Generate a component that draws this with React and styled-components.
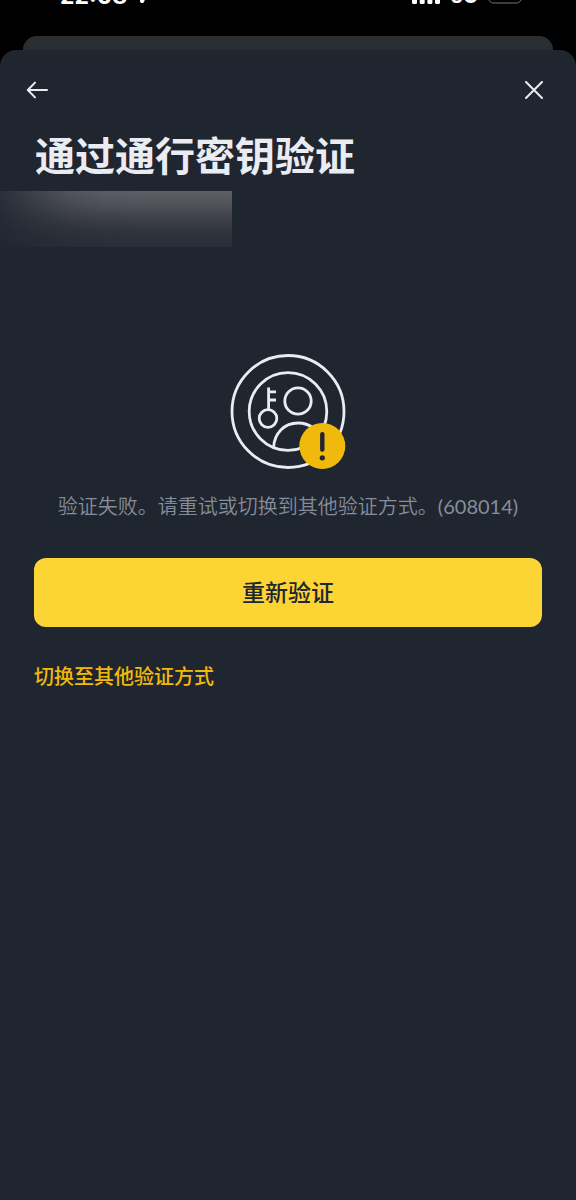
import styled, { createGlobalStyle } from 'styled-components';

const colors = {
  sheet: '#202630',
  sheetBehind: '#292e33',
  text: '#eaecf2',
  muted: '#868d9a',
  primary: '#fcd535',
  accent: '#f0b90b',
  dark: '#202630',
};

const GlobalStyle = createGlobalStyle`
  * {
    box-sizing: border-box;
  }

  body {
    margin: 0;
    background-color: #000;
    color: ${colors.text};
    font-family: Lato, "Noto Sans CJK SC", sans-serif;
  }
`;

const Screen = styled.div`
  min-height: 100vh;
  display: flex;
  flex-direction: column;
`;

const StatusBar = styled.div`
  height: 36px;
  padding: 0 54px 28px 60px;
  display: flex;
  align-items: flex-end;
  justify-content: space-between;
  overflow: hidden;
  color: #fff;
  font-family: Inter, sans-serif;
  font-size: 23px;
  font-weight: 700;
  line-height: 24px;
`;

const StatusGroup = styled.div`
  display: flex;
  align-items: flex-end;
  gap: ${({ $gap }) => $gap};

  svg {
    display: block;
    margin-bottom: 4px;
  }
`;

const Network = styled.span`
  font-size: 20px;
`;

const SheetBehind = styled.div`
  height: 14px;
  margin: 0 23px;
  border-radius: 14px 14px 0 0;
  background-color: ${colors.sheetBehind};
`;

const Sheet = styled.main`
  flex: 1;
  border-radius: 16px 16px 0 0;
  background-color: ${colors.sheet};
`;

const SheetHeader = styled.header`
  display: flex;
  justify-content: space-between;
  padding: 24px 26px 0;
`;

const IconButton = styled.button`
  width: 32px;
  height: 32px;
  padding: 0;
  display: flex;
  align-items: center;
  justify-content: ${({ $align }) => $align};
  border: 0;
  background: none;
  color: ${colors.text};
  cursor: pointer;
`;

const Title = styled.h1`
  margin: 20px 35px 0;
  font-size: 40px;
  font-weight: 700;
  line-height: 60px;
`;

const HiddenAccount = styled.div`
  width: 40.3%;
  height: 56px;
  margin-top: 5px;
  background:
    linear-gradient(to right, #202630d9, #20263080 15%, #20263033 30%, #2026300d 45%, #20263000 60%),
    linear-gradient(#5e5f66, #50525a 25%, #3e4149 48%, #30343d 72%, #282d37);
`;

const Content = styled.section`
  padding: 107px 34px 0;
  display: flex;
  flex-direction: column;
`;

const PasskeyArt = styled.svg`
  display: block;
  align-self: center;
`;

const Message = styled.p`
  margin: 20px 0 0;
  color: ${colors.muted};
  font-size: 20px;
  font-weight: 350;
  line-height: 32px;
  text-align: center;
`;

const ErrorCode = styled.span`
  font-weight: 400;
`;

const RetryButton = styled.button`
  height: 69px;
  margin-top: 36px;
  padding: 0 0 4px;
  border: 0;
  border-radius: 12px;
  background-color: ${colors.primary};
  color: ${colors.dark};
  font-family: inherit;
  font-size: 23px;
  font-weight: 500;
  cursor: pointer;
`;

const SwitchLink = styled.a`
  align-self: flex-start;
  margin-top: 33px;
  color: ${colors.accent};
  font-size: 20px;
  font-weight: 500;
  line-height: 32px;
  text-decoration: none;
`;

const PasskeyFailed = () => (
  <PasskeyArt width="116" height="116" viewBox="0 0 116 116" fill="none" aria-hidden="true">
    <g stroke={colors.text} strokeWidth="2.8">
      <circle cx="58" cy="57.5" r="56" />
      <circle cx="58" cy="57.5" r="38.8" />
      <circle cx="68" cy="47" r="13.2" />
      <circle cx="38" cy="64.5" r="8.8" />
      <path d="M38.6 55.7V33.5M38.6 37.8h7.4M38.6 46h7.4" />
      <path d="M43.6 93.5C44.4 79 54.5 69 68 69c6 0 11 1.6 15.5 5" />
    </g>
    <circle cx="92.3" cy="92" r="23" fill={colors.accent} />
    <path d="M92.3 80.2v15.4" stroke={colors.dark} strokeWidth="4.4" strokeLinecap="round" />
    <circle cx="92.3" cy="103.8" r="2.6" fill={colors.dark} />
  </PasskeyArt>
);

const App = () => {
  return (
    <Screen>
      <GlobalStyle />
      <StatusBar>
        <StatusGroup $gap="6px">
          <time>22:08</time>
          <svg width="16" height="16" viewBox="0 0 16 16" fill="#fff" aria-hidden="true">
            <path d="M16 0 11.2 13.4c-.9 2.6-4.2 2-4.2-.5V9H1.3C-.2 9-.5 7 .8 6.4Z" />
          </svg>
        </StatusGroup>
        <StatusGroup $gap="10px">
          <svg width="28" height="18" viewBox="0 0 28 18" fill="#fff" aria-hidden="true">
            <rect x="0" y="12" width="5" height="6" rx="1.5" />
            <rect x="7.7" y="9" width="5" height="9" rx="1.5" />
            <rect x="15.4" y="5" width="5" height="13" rx="1.5" />
            <rect x="23" y="0" width="5" height="18" rx="1.5" />
          </svg>
          <Network>5G</Network>
          <svg width="34" height="18" viewBox="0 0 34 18" fill="none" aria-hidden="true">
            <rect x="0.5" y="0.5" width="33" height="16.5" rx="5" stroke="#77777a" />
          </svg>
        </StatusGroup>
      </StatusBar>
      <SheetBehind />
      <Sheet>
        <SheetHeader>
          <IconButton type="button" aria-label="返回" $align="flex-start">
            <svg width="22" height="18" viewBox="0 0 22 18" fill="none" aria-hidden="true">
              <path
                d="M9 1.6 1.8 9 9 16.4M1.8 9H21"
                stroke="currentColor"
                strokeWidth="2"
                strokeLinecap="round"
                strokeLinejoin="round"
              />
            </svg>
          </IconButton>
          <IconButton type="button" aria-label="关闭" $align="center">
            <svg width="18" height="18" viewBox="0 0 18 18" fill="none" aria-hidden="true">
              <path
                d="m1 1 16 16M17 1 1 17"
                stroke="currentColor"
                strokeWidth="2"
                strokeLinecap="round"
              />
            </svg>
          </IconButton>
        </SheetHeader>
        <Title>通过通行密钥验证</Title>
        <HiddenAccount />
        <Content>
          <PasskeyFailed />
          <Message>
            验证失败。请重试或切换到其他验证方式。<ErrorCode>(608014)</ErrorCode>
          </Message>
          <RetryButton type="button">重新验证</RetryButton>
          <SwitchLink href="#other-methods">切换至其他验证方式</SwitchLink>
        </Content>
      </Sheet>
    </Screen>
  );
};

export default App;
